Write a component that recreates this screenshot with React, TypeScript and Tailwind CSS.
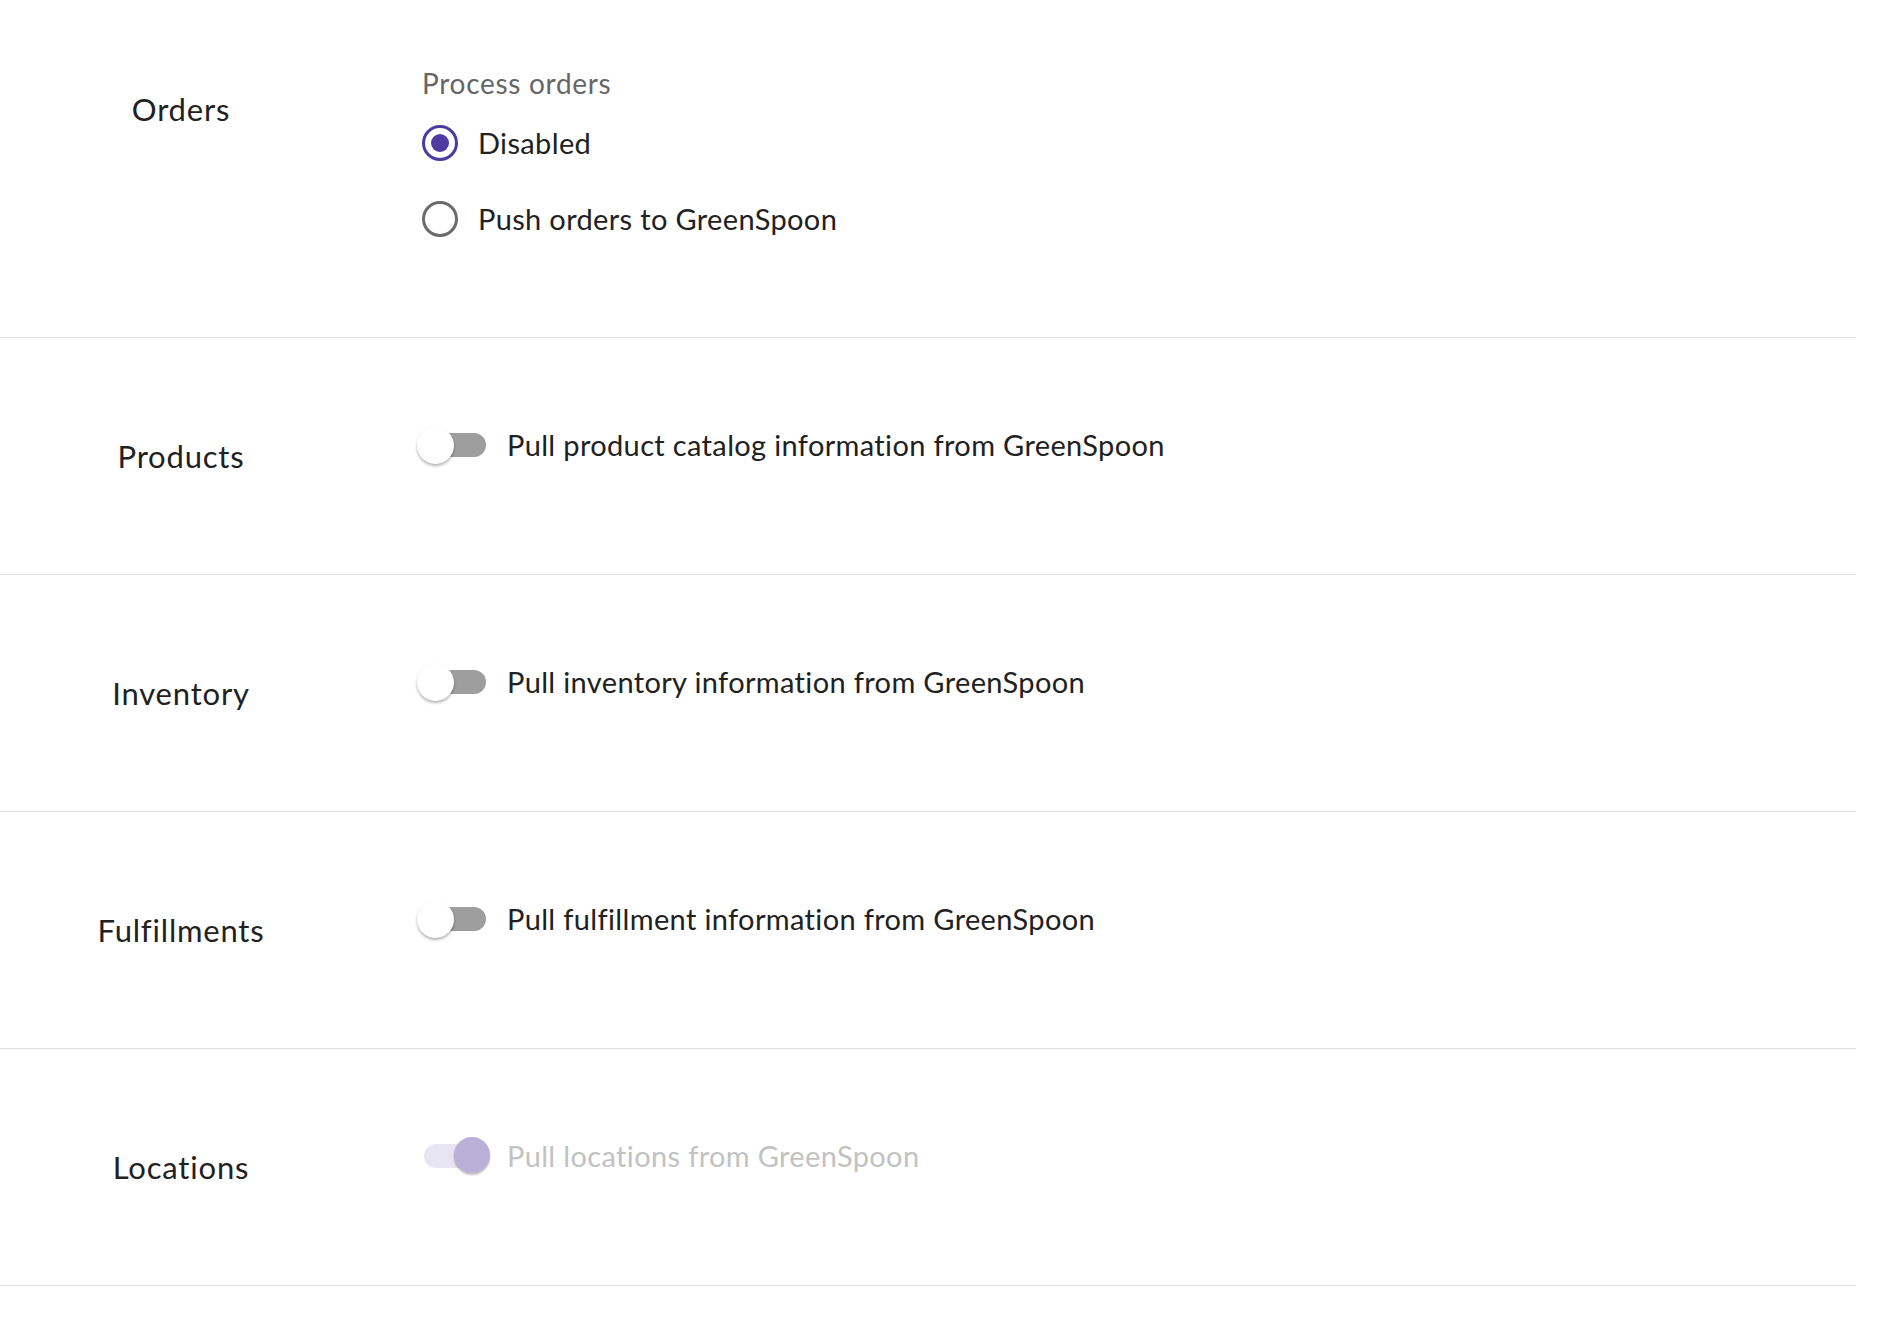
import React from "react";

const font = { fontFamily: "Lato, 'Noto Sans', sans-serif" };

function Toggle({ disabledOn }: { disabledOn?: boolean }) {
  if (disabledOn) {
    return (
      <div className="relative w-[72px] h-[40px] shrink-0">
        <div className="absolute left-[6px] top-[8px] w-[62px] h-[24px] rounded-full bg-[#e8e5f2]" />
        <div className="absolute left-[36px] top-[1px] w-[36px] h-[36px] rounded-full bg-[#b9b0d8] shadow-[0_2px_2px_rgba(0,0,0,0.25)]" />
      </div>
    );
  }
  return (
    <div className="relative w-[72px] h-[40px] shrink-0">
      <div className="absolute left-[4px] top-[8px] w-[64px] h-[24px] rounded-full bg-[#9e9e9e]" />
      <div className="absolute left-[-1px] top-[2px] w-[37px] h-[37px] rounded-full bg-white shadow-[0_2px_3px_rgba(0,0,0,0.3)]" />
    </div>
  );
}

function ToggleSection({ label, text, disabled }: { label: string; text: string; disabled?: boolean }) {
  return (
    <div className="flex items-center h-[237px] border-b border-[#e0e0e0]">
      <div className="w-[362px] flex justify-center">
        <span className="text-[31px] leading-[36px] tracking-[0.8px] text-[#212121]">{label}</span>
      </div>
      <div className="flex items-center mb-[22px] ml-[56px]">
        <Toggle disabledOn={disabled} />
        <span
          className={`ml-[17px] text-[29px] leading-[36px] tracking-[0.35px] ${
            disabled ? "text-[#c2c2c2]" : "text-[#212121]"
          }`}
        >
          {text}
        </span>
      </div>
    </div>
  );
}

function Radio({ checked }: { checked?: boolean }) {
  return (
    <div
      className={`w-[36px] h-[36px] rounded-full border-[3px] flex items-center justify-center shrink-0 ${
        checked ? "border-[#4e3aa3]" : "border-[#6b6b6b]"
      }`}
    >
      {checked && <div className="w-[18px] h-[18px] rounded-full bg-[#4e3aa3]" />}
    </div>
  );
}

export default function App() {
  return (
    <div className="w-[1856px] bg-white" style={font}>
      <div className="flex items-start h-[338px] border-b border-[#e0e0e0]">
        <div className="w-[362px] flex justify-center pt-[91px]">
          <span className="text-[31px] leading-[36px] tracking-[0.8px] text-[#212121]">Orders</span>
        </div>
        <div className="pt-[65px] ml-[60px] flex flex-col">
          <span className="text-[28px] leading-[36px] tracking-[0.7px] text-[#666666]">Process orders</span>
          <div className="flex items-center h-[76px] mt-[4px]">
            <Radio checked />
            <span className="ml-[20px] text-[29px] leading-[36px] tracking-[0.35px] text-[#212121]">Disabled</span>
          </div>
          <div className="flex items-center h-[76px]">
            <Radio />
            <span className="ml-[20px] text-[29px] leading-[36px] tracking-[0.35px] text-[#212121]">
              Push orders to GreenSpoon
            </span>
          </div>
        </div>
      </div>
      <ToggleSection label="Products" text="Pull product catalog information from GreenSpoon" />
      <ToggleSection label="Inventory" text="Pull inventory information from GreenSpoon" />
      <ToggleSection label="Fulfillments" text="Pull fulfillment information from GreenSpoon" />
      <ToggleSection label="Locations" text="Pull locations from GreenSpoon" disabled />
    </div>
  );
}
